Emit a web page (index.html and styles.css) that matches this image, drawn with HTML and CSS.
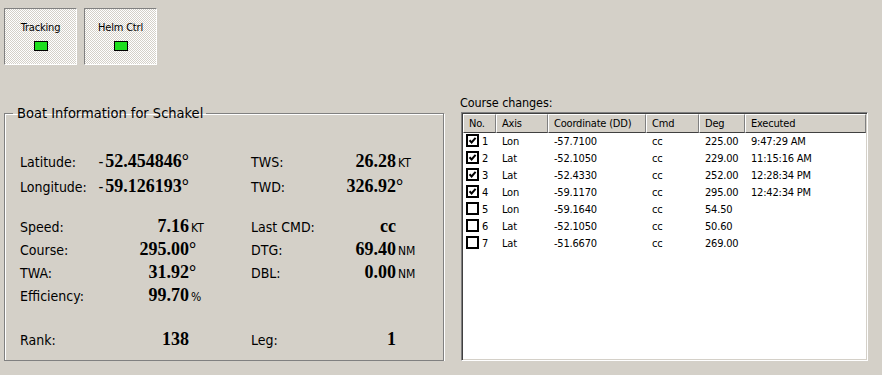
FILE: index.html
```html
<!DOCTYPE html>
<html lang="en">
<head>
    <meta charset="UTF-8">
    <meta name="viewport" content="width=device-width, initial-scale=1.0">
    <title>Boat Information for Schakel</title>
    <link rel="stylesheet" href="styles.css">
</head>
<body>

    <div class="toolbar">
        <div class="toggle">
            <span class="toggle-text">Tracking</span>
            <span class="led"></span>
        </div>
        <div class="toggle">
            <span class="toggle-text">Helm Ctrl</span>
            <span class="led"></span>
        </div>
    </div>

    <div class="main">
        <fieldset class="boat">
            <legend>Boat Information for Schakel</legend>

            <div class="section pos">
                <span class="label">Latitude:</span>
                <span class="value"><span class="minus">-</span>52.454846°</span>
                <span class="unit"></span>
                <span class="label">TWS:</span>
                <span class="value">26.28</span>
                <span class="unit">KT</span>

                <span class="label">Longitude:</span>
                <span class="value"><span class="minus">-</span>59.126193°</span>
                <span class="unit"></span>
                <span class="label">TWD:</span>
                <span class="value">326.92</span>
                <span class="unit deg">°</span>
            </div>

            <div class="section">
                <span class="label">Speed:</span>
                <span class="value">7.16</span>
                <span class="unit">KT</span>
                <span class="label">Last CMD:</span>
                <span class="value">cc</span>
                <span class="unit"></span>

                <span class="label">Course:</span>
                <span class="value">295.00</span>
                <span class="unit deg">°</span>
                <span class="label">DTG:</span>
                <span class="value">69.40</span>
                <span class="unit">NM</span>

                <span class="label">TWA:</span>
                <span class="value">31.92</span>
                <span class="unit deg">°</span>
                <span class="label">DBL:</span>
                <span class="value">0.00</span>
                <span class="unit">NM</span>

                <span class="label">Efficiency:</span>
                <span class="value">99.70</span>
                <span class="unit">%</span>
                <span class="label"></span>
                <span class="value"></span>
                <span class="unit"></span>
            </div>

            <div class="section last">
                <span class="label">Rank:</span>
                <span class="value">138</span>
                <span class="unit"></span>
                <span class="label">Leg:</span>
                <span class="value">1</span>
                <span class="unit"></span>
            </div>
        </fieldset>

        <div class="course">
            <div class="caption">Course changes:</div>
            <div class="listbox">
                <table>
                    <colgroup>
                        <col style="width: 33px">
                        <col style="width: 52px">
                        <col style="width: 98px">
                        <col style="width: 53px">
                        <col style="width: 46px">
                        <col>
                    </colgroup>
                    <thead>
                        <tr>
                            <th>No.</th>
                            <th>Axis</th>
                            <th>Coordinate (DD)</th>
                            <th>Cmd</th>
                            <th>Deg</th>
                            <th>Executed</th>
                        </tr>
                    </thead>
                    <tbody>
                        <tr>
                            <td><svg class="check" width="13" height="13"><rect x="1" y="1" width="11" height="11" fill="#fff" stroke="#000" stroke-width="2"/><path d="M3.5 6.2 L5.6 8.4 L9.6 3.8" fill="none" stroke="#000" stroke-width="2"/></svg>1</td>
                            <td>Lon</td><td>-57.7100</td><td>cc</td><td>225.00</td><td>9:47:29 AM</td>
                        </tr>
                        <tr>
                            <td><svg class="check" width="13" height="13"><rect x="1" y="1" width="11" height="11" fill="#fff" stroke="#000" stroke-width="2"/><path d="M3.5 6.2 L5.6 8.4 L9.6 3.8" fill="none" stroke="#000" stroke-width="2"/></svg>2</td>
                            <td>Lat</td><td>-52.1050</td><td>cc</td><td>229.00</td><td>11:15:16 AM</td>
                        </tr>
                        <tr>
                            <td><svg class="check" width="13" height="13"><rect x="1" y="1" width="11" height="11" fill="#fff" stroke="#000" stroke-width="2"/><path d="M3.5 6.2 L5.6 8.4 L9.6 3.8" fill="none" stroke="#000" stroke-width="2"/></svg>3</td>
                            <td>Lat</td><td>-52.4330</td><td>cc</td><td>252.00</td><td>12:28:34 PM</td>
                        </tr>
                        <tr>
                            <td><svg class="check" width="13" height="13"><rect x="1" y="1" width="11" height="11" fill="#fff" stroke="#000" stroke-width="2"/><path d="M3.5 6.2 L5.6 8.4 L9.6 3.8" fill="none" stroke="#000" stroke-width="2"/></svg>4</td>
                            <td>Lon</td><td>-59.1170</td><td>cc</td><td>295.00</td><td>12:42:34 PM</td>
                        </tr>
                        <tr>
                            <td><svg class="check" width="13" height="13"><rect x="1" y="1" width="11" height="11" fill="#fff" stroke="#000" stroke-width="2"/></svg>5</td>
                            <td>Lon</td><td>-59.1640</td><td>cc</td><td>54.50</td><td></td>
                        </tr>
                        <tr>
                            <td><svg class="check" width="13" height="13"><rect x="1" y="1" width="11" height="11" fill="#fff" stroke="#000" stroke-width="2"/></svg>6</td>
                            <td>Lat</td><td>-52.1050</td><td>cc</td><td>50.60</td><td></td>
                        </tr>
                        <tr>
                            <td><svg class="check" width="13" height="13"><rect x="1" y="1" width="11" height="11" fill="#fff" stroke="#000" stroke-width="2"/></svg>7</td>
                            <td>Lat</td><td>-51.6670</td><td>cc</td><td>269.00</td><td></td>
                        </tr>
                    </tbody>
                </table>
            </div>
        </div>
    </div>

</body>
</html>
```

FILE: styles.css
```css
body {
    margin: 0;
    background-color: #d4d0c8;
    font-family: "DejaVu Sans Condensed", "DejaVu Sans", sans-serif;
    font-size: 11px;
    color: #000;
}

/* toggle buttons at the top */
.toolbar {
    display: flex;
    gap: 7px;
    padding: 8px 0 0 4px;
}
.toggle {
    width: 73px;
    height: 57px;
    box-sizing: border-box;
    display: flex;
    flex-direction: column;
    align-items: center;
    padding-top: 12px;
    border: 1px solid;
    border-color: #808080 #fff #fff #808080;
    background-color: #d4d0c8;
    background-image: repeating-conic-gradient(#fff 0 25%, #d4d0c8 0 50%);
    background-size: 2px 2px;
}
.toggle-text {
    line-height: 13px;
    letter-spacing: -0.2px;
}
.led {
    width: 14px;
    height: 10px;
    box-sizing: border-box;
    margin-top: 7px;
    border: 1px solid #000;
    background-color: #1ee01e;
}

.main {
    display: flex;
    align-items: flex-start;
    gap: 16px;
    margin: 31px 0 0 4px;
}

/* group box */
.boat {
    width: 440px;
    box-sizing: border-box;
    min-width: 0;
    margin: 9px 0 0 0;
    padding: 0 0 8px 8px;
    border: 1px solid #808080;
    box-shadow: inset 1px 1px 0 #fff, 1px 1px 0 #fff;
}
.boat legend {
    padding: 0 3px 0 4px;
    font-size: 14.5px;
    line-height: 16px;
}

.section {
    display: grid;
    grid-template-columns: 78px 91px 62px 70px 75px 1fr;
    grid-auto-rows: 23px;
    align-items: baseline;
    padding-left: 7px;
    margin-top: 15px;
}
.section.pos {
    grid-auto-rows: 25px;
    margin-top: 30px;
}
.section.last {
    margin-top: 21px;
}
.label {
    font-size: 14px;
    line-height: 23px;
}
.value {
    font-family: "Liberation Serif", serif;
    font-weight: bold;
    font-size: 18px;
    line-height: 20px;
    text-align: right;
    white-space: nowrap;
}
.minus {
    font-family: "DejaVu Sans Condensed", "DejaVu Sans", sans-serif;
    font-weight: normal;
    font-size: 15px;
    padding-right: 2px;
}
.unit {
    font-size: 12px;
    padding-left: 2px;
}
.unit.deg {
    font-family: "Liberation Serif", serif;
    font-weight: bold;
    font-size: 18px;
    line-height: 20px;
    padding-left: 0;
}

/* course list */
.caption {
    font-size: 12.5px;
    line-height: 13px;
    letter-spacing: -0.1px;
}
.listbox {
    width: 407px;
    height: 249px;
    box-sizing: border-box;
    margin: 3px 0 0 1px;
    padding: 1px;
    background-color: #fff;
    border: 1px solid;
    border-color: #808080 #fff #fff #808080;
    box-shadow: inset 1px 1px 0 #404040, inset -1px -1px 0 #d4d0c8;
}
.listbox table {
    width: 100%;
    table-layout: fixed;
    border-spacing: 0;
}
.listbox th {
    height: 19px;
    box-sizing: border-box;
    padding: 0 0 0 5px;
    background-color: #d4d0c8;
    border: 1px solid;
    border-color: #fff #808080 #404040 #fff;
    font-weight: normal;
    text-align: left;
    letter-spacing: -0.2px;
    white-space: nowrap;
}
.listbox td {
    height: 17px;
    padding: 0 0 0 6px;
    line-height: 17px;
    letter-spacing: -0.2px;
    white-space: nowrap;
}
.listbox td:first-child {
    padding-left: 3px;
}
.check {
    vertical-align: -2px;
    margin-right: 3px;
}
```
